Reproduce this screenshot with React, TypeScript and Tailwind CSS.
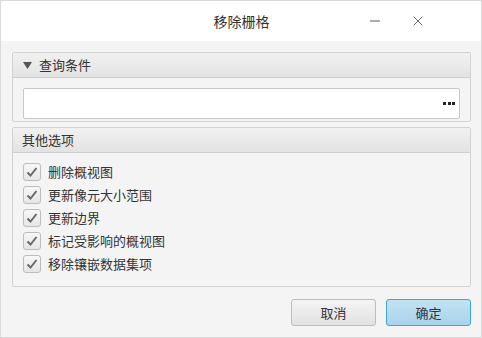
import { Minus, X } from "lucide-react";

const OPTIONS = ["删除概视图", "更新像元大小范围", "更新边界", "标记受影响的概视图", "移除镶嵌数据集项"];

const font = { fontFamily: '"Noto Sans CJK SC", "Noto Sans", sans-serif' };

function CheckBox() {
  return (
    <div className="w-[18px] h-[18px] rounded-[3px] border border-[#bcbcbc] bg-gradient-to-b from-[#f7f7f7] to-[#e6e6e6] flex items-center justify-center">
      <svg width="14" height="14" viewBox="0 0 14 14">
        <path d="M2.5 7.5 L5.5 10.5 L11.5 3" fill="none" stroke="#6a6a6a" strokeWidth="2" />
      </svg>
    </div>
  );
}

export default function App() {
  return (
    <div className="w-[482px] h-[338px] border border-[#dadada] flex flex-col text-[#333]" style={font}>
      {/* Title bar */}
      <div className="h-[40px] bg-white flex items-center relative">
        <div className="flex-1 text-center text-[14px] text-[#333] pl-[1px]">移除栅格</div>
        <div className="absolute left-[366px] top-[12px] text-[#333]">
          <Minus size={16} strokeWidth={1.2} />
        </div>
        <div className="absolute left-[409px] top-[12px] text-[#444]">
          <X size={16} strokeWidth={1.2} />
        </div>
      </div>

      {/* Body */}
      <div className="flex-1 bg-[#f4f4f4] pt-[11px] pl-[11px] pr-[10px] flex flex-col">
        <div className="border border-[#d2d2d2] rounded-[2px]">
          <div className="h-[25px] bg-gradient-to-b from-[#f1f1f1] to-[#e3e3e3] border-b border-[#cfcfcf] flex items-center pl-[10px] gap-[7px]">
            <svg width="9" height="7" viewBox="0 0 9 7">
              <path d="M0 0 H9 L4.5 7 Z" fill="#555" />
            </svg>
            <span className="text-[13px]">查询条件</span>
          </div>
          <div className="px-[10px] pt-[10px] pb-[2px]">
            <div className="h-[31px] bg-white border border-[#c8c8c8] rounded-[2px] flex items-center justify-end pr-[4px] gap-[1.5px]">
              <span className="w-[3px] h-[3px] bg-[#222]" />
              <span className="w-[3px] h-[3px] bg-[#222]" />
              <span className="w-[3px] h-[3px] bg-[#222]" />
            </div>
          </div>
        </div>

        <div className="border border-[#d2d2d2] rounded-[2px] mt-[5px] h-[160px]">
          <div className="h-[25px] bg-gradient-to-b from-[#f1f1f1] to-[#e3e3e3] border-b border-[#cfcfcf] flex items-center pl-[9px]">
            <span className="text-[13px]">其他选项</span>
          </div>
          <div className="pl-[10px] pt-[10px] flex flex-col gap-[5px]">
            {OPTIONS.map((o) => (
              <div key={o} className="flex items-center gap-[7px] h-[18px]">
                <CheckBox />
                <span className="text-[13px] text-[#333]">{o}</span>
              </div>
            ))}
          </div>
        </div>

        <div className="flex justify-end gap-[10px] mt-[12px]">
          <button className="w-[85px] h-[27px] rounded-[3px] border border-[#bcbcbc] bg-gradient-to-b from-[#f4f4f4] to-[#e2e2e2] text-[13px] text-[#333]">
            取消
          </button>
          <button className="w-[85px] h-[27px] rounded-[3px] border border-[#3da4dc] bg-gradient-to-b from-[#c2e2f3] to-[#a9d3ea] text-[13px] text-[#333]">
            确定
          </button>
        </div>
      </div>
    </div>
  );
}
